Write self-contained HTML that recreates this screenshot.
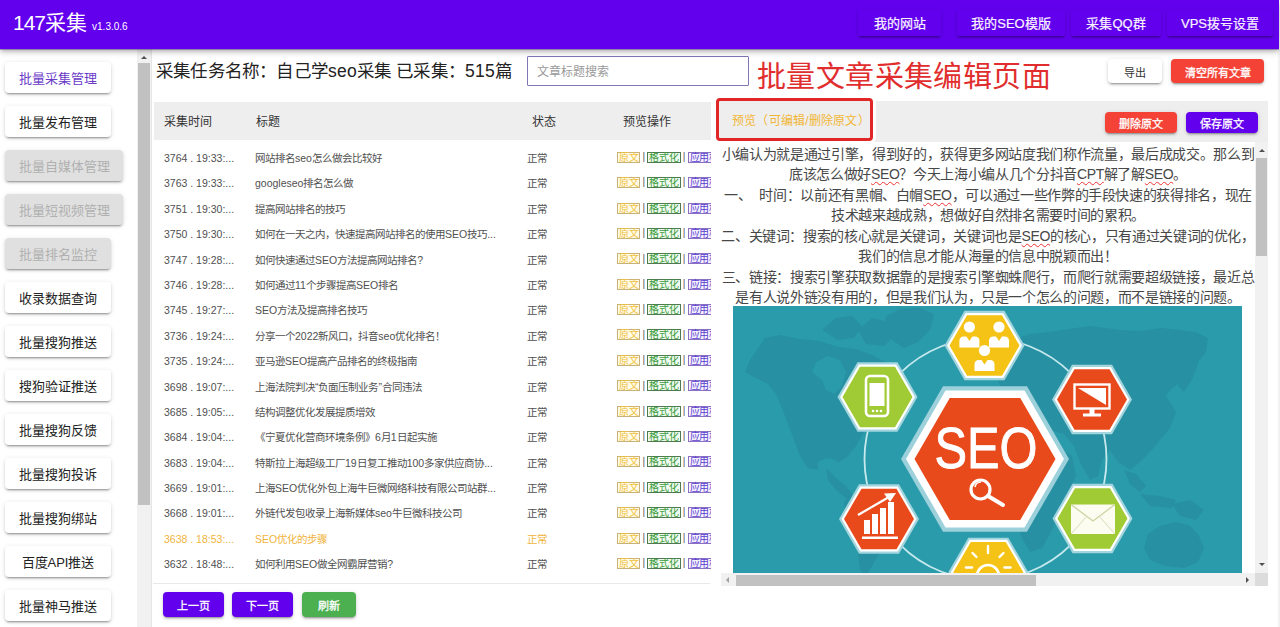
<!DOCTYPE html>
<html lang="zh-CN">
<head>
<meta charset="utf-8">
<style>
*{box-sizing:border-box;margin:0;padding:0}
html,body{width:1280px;height:627px;overflow:hidden;background:#fff;font-family:"Liberation Sans",sans-serif;color:#333}
.abs{position:absolute}
#hdr{position:absolute;left:0;top:0;width:1279px;height:49px;background:#6200ee;box-shadow:0 1px 0 rgba(40,0,120,.3),0 2px 4px -1px rgba(0,0,0,.2),0 4px 5px 0 rgba(0,0,0,.12),0 1px 10px 0 rgba(0,0,0,.1);z-index:5}
#logo{position:absolute;left:13px;top:9px;color:#fff;font-size:21px;line-height:28px;white-space:nowrap}
#logo small{font-size:10px;margin-left:5px}
.nav{position:absolute;top:9px;height:27px;color:#fbf4ff;font-size:13px;line-height:29px;-webkit-text-stroke:0.2px currentColor;text-align:center;border-radius:2px;box-shadow:0 3px 1px -2px rgba(0,0,0,.2),0 2px 2px 0 rgba(0,0,0,.14),0 1px 5px 0 rgba(0,0,0,.12)}
.sb{position:absolute;left:5px;height:31px;font-size:13px;line-height:33px;text-align:center;background:#fff;color:#222;border-radius:4px;box-shadow:0 3px 1px -2px rgba(0,0,0,.2),0 2px 2px 0 rgba(0,0,0,.14),0 1px 5px 0 rgba(0,0,0,.12);white-space:nowrap}
.sb.dis{background:#e0e0e0;color:#b0b0b0}
.sb.act{color:#6a3bc7}
#sscroll{position:absolute;left:137px;top:49px;width:15px;height:578px;background:#f1f1f1;border-right:1px solid #e6e6e6}
#sarrow{position:absolute;left:141px;top:56px;width:0;height:0;border-left:3px solid transparent;border-right:3px solid transparent;border-bottom:3px solid #505050}
#sthumb{position:absolute;left:138px;top:63px;width:12px;height:442px;background:#c1c1c1}
#title{position:absolute;left:156px;top:57px;letter-spacing:0.2px;font-size:17.5px;line-height:28px;color:#222;white-space:nowrap}
#search{position:absolute;left:527px;top:56px;width:222px;height:30px;border:1px solid #8374b4;border-radius:1px;font-size:12px;line-height:30px;padding-left:9px;color:#999}
#bigred{position:absolute;left:757px;top:58px;letter-spacing:0.4px;font-size:29px;line-height:38px;color:#e12d2d;white-space:nowrap}
.btn{position:absolute;-webkit-text-stroke:0.3px currentColor;padding-top:1.5px;height:24px;line-height:24px;font-size:11px;text-align:center;border-radius:4px;white-space:nowrap;box-shadow:0 3px 1px -2px rgba(0,0,0,.2),0 2px 2px 0 rgba(0,0,0,.14),0 1px 5px 0 rgba(0,0,0,.12)}
#thead{position:absolute;left:154px;top:102px;width:557px;height:38px;background:#eeeeee}
.th{position:absolute;top:1px;line-height:38px;font-size:12px;color:#333;white-space:nowrap}
#rows{position:absolute;left:154px;top:146px;width:557px;height:437px;overflow:hidden}
.row{position:relative;height:25.4px;font-size:10.5px;line-height:25.4px;color:#505050;white-space:nowrap}
.row span{position:absolute;top:0}
.row.hl{color:#f0b43c}
.tag{font-style:normal;display:inline-block;height:11px;line-height:9px;font-size:10px;border:1px solid;padding:0 1px;vertical-align:middle;position:relative;top:-2px;letter-spacing:-0.3px}
.t1{color:#f0c040;border-color:#c8b27a;background:#fffbe6}
.t2{color:#3c9c3c;border-color:#4f7a4f;background:#f0faf0}
.t3{color:#5a3fd0;border-color:#8a70c0;background:#f6f2fd}
.sep{font-style:normal;display:inline-block;width:7px;position:relative;top:-2px;text-align:center;color:#555;font-size:10px}
#divider{position:absolute;left:153px;top:583px;width:557px;height:1px;background:#e8e8e8}
#phead{position:absolute;left:717px;top:101px;width:551px;height:41px;background:#eeeeee}
#redbox{position:absolute;left:716px;top:98px;width:157px;height:43px;border:3px solid #e02626;border-radius:4px;box-shadow:0 0 0 3px #fff;background:#eeeeee}
#redbox div{position:absolute;left:13px;top:1px;line-height:38px;font-size:12px;letter-spacing:0.2px;color:#f2b635;white-space:nowrap}
#ta{position:absolute;left:721px;top:142px;width:547px;height:444px;overflow:hidden;background:#fff}
#txt{position:absolute;left:0;top:2px;width:534px;white-space:nowrap;font-size:14px;letter-spacing:-0.35px;line-height:20.45px;text-align:center;color:#474747}
.sp{text-decoration:underline wavy #e33;text-decoration-thickness:1px;text-underline-offset:2px}
#seo{position:absolute;left:12px;top:164px}
#vs{position:absolute;left:534px;top:0;width:13px;height:431px;background:#f1f1f1}
#hs{position:absolute;left:0;top:431px;width:534px;height:13px;background:#f1f1f1}
#corner{position:absolute;left:534px;top:431px;width:13px;height:13px;background:#dcdcdc}
.tri{position:absolute;width:0;height:0}
#vthumb{position:absolute;left:1px;top:16px;width:11px;height:98px;background:#c1c1c1}
#hthumb{position:absolute;left:15px;top:1.5px;width:300px;height:11px;background:#c1c1c1}
</style>
</head>
<body>
<div id="hdr">
  <div id="logo"><span style="letter-spacing:-1px">147</span>采集<small>v1.3.0.6</small></div>
  <div class="nav" style="left:858px;width:83px">我的网站</div>
  <div class="nav" style="left:957px;width:108px">我的SEO模版</div>
  <div class="nav" style="left:1071px;width:90px">采集QQ群</div>
  <div class="nav" style="left:1167px;width:106px">VPS拨号设置</div>
</div>

<!-- sidebar -->
<div class="sb act" style="top:62px;width:106px">批量采集管理</div>
<div class="sb" style="top:106px;width:106px">批量发布管理</div>
<div class="sb dis" style="top:150px;width:118px">批量自媒体管理</div>
<div class="sb dis" style="top:194px;width:118px">批量短视频管理</div>
<div class="sb dis" style="top:238px;width:106px">批量排名监控</div>
<div class="sb" style="top:282px;width:106px">收录数据查询</div>
<div class="sb" style="top:326px;width:106px">批量搜狗推送</div>
<div class="sb" style="top:370px;width:106px">搜狗验证推送</div>
<div class="sb" style="top:414px;width:106px">批量搜狗反馈</div>
<div class="sb" style="top:458px;width:106px">批量搜狗投诉</div>
<div class="sb" style="top:502px;width:106px">批量搜狗绑站</div>
<div class="sb" style="top:546px;width:106px">百度API推送</div>
<div class="sb" style="top:590px;width:106px">批量神马推送</div>
<div id="sscroll"></div>
<div id="sthumb"></div><div id="sarrow"></div>

<div id="title">采集任务名称：自己学seo采集 已采集：515篇</div>
<div id="search">文章标题搜索</div>
<div id="bigred">批量文章采集编辑页面</div>
<div class="btn" style="left:1108px;top:59px;width:54px;background:#fff;color:#333;-webkit-text-stroke:0;">导出</div>
<div class="btn" style="left:1171px;top:59px;width:93px;background:#f44336;color:#fff">清空所有文章</div>

<div id="thead">
  <div class="th" style="left:10px">采集时间</div>
  <div class="th" style="left:102px">标题</div>
  <div class="th" style="left:378px">状态</div>
  <div class="th" style="left:469px">预览操作</div>
</div>
<div id="rows">
<div class="row"><span style="left:10px">3764 . 19:33:...</span><span style="left:101px">网站排名seo怎么做会比较好</span><span style="left:373px">正常</span><span class="ops" style="left:463px"><i class="tag t1">原文</i><i class="sep">|</i><i class="tag t2">格式化</i><i class="sep">|</i><i class="tag t3">应用格式</i></span></div>
<div class="row"><span style="left:10px">3763 . 19:33:...</span><span style="left:101px">googleseo排名怎么做</span><span style="left:373px">正常</span><span class="ops" style="left:463px"><i class="tag t1">原文</i><i class="sep">|</i><i class="tag t2">格式化</i><i class="sep">|</i><i class="tag t3">应用格式</i></span></div>
<div class="row"><span style="left:10px">3751 . 19:30:...</span><span style="left:101px">提高网站排名的技巧</span><span style="left:373px">正常</span><span class="ops" style="left:463px"><i class="tag t1">原文</i><i class="sep">|</i><i class="tag t2">格式化</i><i class="sep">|</i><i class="tag t3">应用格式</i></span></div>
<div class="row"><span style="left:10px">3750 . 19:30:...</span><span style="left:101px">如何在一天之内，快速提高网站排名的使用SEO技巧...</span><span style="left:373px">正常</span><span class="ops" style="left:463px"><i class="tag t1">原文</i><i class="sep">|</i><i class="tag t2">格式化</i><i class="sep">|</i><i class="tag t3">应用格式</i></span></div>
<div class="row"><span style="left:10px">3747 . 19:28:...</span><span style="left:101px">如何快速通过SEO方法提高网站排名?</span><span style="left:373px">正常</span><span class="ops" style="left:463px"><i class="tag t1">原文</i><i class="sep">|</i><i class="tag t2">格式化</i><i class="sep">|</i><i class="tag t3">应用格式</i></span></div>
<div class="row"><span style="left:10px">3746 . 19:28:...</span><span style="left:101px">如何通过11个步骤提高SEO排名</span><span style="left:373px">正常</span><span class="ops" style="left:463px"><i class="tag t1">原文</i><i class="sep">|</i><i class="tag t2">格式化</i><i class="sep">|</i><i class="tag t3">应用格式</i></span></div>
<div class="row"><span style="left:10px">3745 . 19:27:...</span><span style="left:101px">SEO方法及提高排名技巧</span><span style="left:373px">正常</span><span class="ops" style="left:463px"><i class="tag t1">原文</i><i class="sep">|</i><i class="tag t2">格式化</i><i class="sep">|</i><i class="tag t3">应用格式</i></span></div>
<div class="row"><span style="left:10px">3736 . 19:24:...</span><span style="left:101px">分享一个2022新风口，抖音seo优化排名！</span><span style="left:373px">正常</span><span class="ops" style="left:463px"><i class="tag t1">原文</i><i class="sep">|</i><i class="tag t2">格式化</i><i class="sep">|</i><i class="tag t3">应用格式</i></span></div>
<div class="row"><span style="left:10px">3735 . 19:24:...</span><span style="left:101px">亚马逊SEO提高产品排名的终极指南</span><span style="left:373px">正常</span><span class="ops" style="left:463px"><i class="tag t1">原文</i><i class="sep">|</i><i class="tag t2">格式化</i><i class="sep">|</i><i class="tag t3">应用格式</i></span></div>
<div class="row"><span style="left:10px">3698 . 19:07:...</span><span style="left:101px">上海法院判决“负面压制业务”合同违法</span><span style="left:373px">正常</span><span class="ops" style="left:463px"><i class="tag t1">原文</i><i class="sep">|</i><i class="tag t2">格式化</i><i class="sep">|</i><i class="tag t3">应用格式</i></span></div>
<div class="row"><span style="left:10px">3685 . 19:05:...</span><span style="left:101px">结构调整优化发展提质增效</span><span style="left:373px">正常</span><span class="ops" style="left:463px"><i class="tag t1">原文</i><i class="sep">|</i><i class="tag t2">格式化</i><i class="sep">|</i><i class="tag t3">应用格式</i></span></div>
<div class="row"><span style="left:10px">3684 . 19:04:...</span><span style="left:101px">《宁夏优化营商环境条例》6月1日起实施</span><span style="left:373px">正常</span><span class="ops" style="left:463px"><i class="tag t1">原文</i><i class="sep">|</i><i class="tag t2">格式化</i><i class="sep">|</i><i class="tag t3">应用格式</i></span></div>
<div class="row"><span style="left:10px">3683 . 19:04:...</span><span style="left:101px">特斯拉上海超级工厂19日复工推动100多家供应商协...</span><span style="left:373px">正常</span><span class="ops" style="left:463px"><i class="tag t1">原文</i><i class="sep">|</i><i class="tag t2">格式化</i><i class="sep">|</i><i class="tag t3">应用格式</i></span></div>
<div class="row"><span style="left:10px">3669 . 19:01:...</span><span style="left:101px">上海SEO优化外包上海牛巨微网络科技有限公司站群...</span><span style="left:373px">正常</span><span class="ops" style="left:463px"><i class="tag t1">原文</i><i class="sep">|</i><i class="tag t2">格式化</i><i class="sep">|</i><i class="tag t3">应用格式</i></span></div>
<div class="row"><span style="left:10px">3668 . 19:01:...</span><span style="left:101px">外链代发包收录上海新媒体seo牛巨微科技公司</span><span style="left:373px">正常</span><span class="ops" style="left:463px"><i class="tag t1">原文</i><i class="sep">|</i><i class="tag t2">格式化</i><i class="sep">|</i><i class="tag t3">应用格式</i></span></div>
<div class="row hl"><span style="left:10px">3638 . 18:53:...</span><span style="left:101px">SEO优化的步骤</span><span style="left:373px">正常</span><span class="ops" style="left:463px"><i class="tag t1">原文</i><i class="sep">|</i><i class="tag t2">格式化</i><i class="sep">|</i><i class="tag t3">应用格式</i></span></div>
<div class="row"><span style="left:10px">3632 . 18:48:...</span><span style="left:101px">如何利用SEO做全网霸屏营销?</span><span style="left:373px">正常</span><span class="ops" style="left:463px"><i class="tag t1">原文</i><i class="sep">|</i><i class="tag t2">格式化</i><i class="sep">|</i><i class="tag t3">应用格式</i></span></div>
</div>
<div id="divider"></div>

<div id="phead"></div>
<div id="redbox"><div>预览（可编辑/删除原文）</div></div>
<div class="btn" style="left:1105px;top:112px;width:72px;height:21px;line-height:21px;background:#f44336;color:#fff">删除原文</div>
<div class="btn" style="left:1186px;top:112px;width:72px;height:21px;line-height:21px;background:#6200ee;color:#fff">保存原文</div>

<div id="ta">
  <div id="txt">小编认为就是通过引擎，得到好的，获得更多网站度我们称作流量，最后成成交。那么到<br>底该怎么做好<span class="sp">SEO</span>？今天上海小编从几个分抖音<span class="sp">CPT</span>解了解<span class="sp">SEO</span>。<br>一、<span style="margin-left:8px"></span>时间：以前还有黑帽、白帽<span class="sp">SEO</span>，可以通过一些作弊的手段快速的获得排名，现在<br>技术越来越成熟，想做好自然排名需要时间的累积。<br>二、关键词：搜索的核心就是关键词，关键词也是<span class="sp">SEO</span>的核心，只有通过关键词的优化，<br>我们的信息才能从海量的信息中脱颖而出！<br>三、链接：搜索引擎获取数据靠的是搜索引擎蜘蛛爬行，而爬行就需要超级链接，最近总<br>是有人说外链没有用的，但是我们认为，只是一个怎么的问题，而不是链接的问题。</div>
  <svg id="seo" width="509" height="290" viewBox="733 306 509 290">
<rect x="733" y="306" width="509" height="290" fill="#2a9bab"/>
<g fill="#2790a2">
<path d="M745,372 L750,360 L758,348 L765,338 L780,335 L800,339 L820,341 L838,347 L856,349 L872,355 L890,365 L900,380 L892,398 L878,412 L866,428 L856,446 L846,458 L832,466 L820,470 L808,468 L800,456 L794,440 L788,424 L782,408 L776,394 L768,384 L756,378 Z"/>
<path d="M816,362 L828,356 L840,360 L846,372 L842,386 L834,394 L826,390 L822,380 L812,372 Z" fill="#2a9bab"/>
<path d="M818,462 C826,456 838,458 840,466 C838,474 826,476 818,470 Z" fill="#2a9bab"/>
<path d="M822,330 L836,318 L852,316 L862,326 L854,338 L838,340 Z"/>
<path d="M858,330 L872,318 L888,322 L896,334 L884,346 L866,344 Z"/>
<path d="M886,316 L900,309 L920,308 L934,314 L930,330 L918,342 L904,348 L892,340 L884,328 Z"/>
<path d="M826,468 L836,478 L846,486 L852,494 L846,498 L836,490 L828,480 Z"/>
<path d="M848,494 L866,496 L882,506 L892,520 L888,538 L880,552 L872,566 L866,576 L860,570 L858,552 L852,534 L846,516 L844,504 Z"/>
<path d="M1000,352 L1012,340 L1030,334 L1048,332 L1062,330 L1090,326 L1120,330 L1140,331 L1162,328 L1180,330 L1196,332 L1208,338 L1206,352 L1198,362 L1190,376 L1172,388 L1166,396 L1176,412 L1170,428 L1160,440 L1150,452 L1140,462 L1130,470 L1118,462 L1110,450 L1102,460 L1098,476 L1090,480 L1080,462 L1074,446 L1064,434 L1050,430 L1036,428 L1022,420 L1010,408 L1002,392 L996,374 Z"/>
<path d="M1186,356 L1194,350 L1198,364 L1192,380 L1184,392 L1178,386 L1184,372 Z"/>
<path d="M1124,470 L1136,474 L1146,486 L1140,492 L1130,484 Z"/>
<path d="M1140,494 L1160,496 L1176,500 L1172,508 L1150,506 Z"/>
<path d="M1172,504 L1190,500 L1204,510 L1196,520 L1180,516 Z"/>
<path d="M1000,440 L1024,432 L1046,436 L1060,448 L1072,456 L1076,476 L1066,496 L1058,516 L1050,534 L1042,548 L1030,552 L1022,538 L1016,518 L1006,500 L996,484 L992,462 Z"/>
<path d="M1036,524 L1044,520 L1046,534 L1040,544 L1034,538 Z"/>
<path d="M1148,534 L1160,526 L1176,522 L1190,526 L1198,534 L1204,548 L1198,562 L1184,568 L1166,566 L1150,560 L1144,548 Z"/>
</g>
<circle cx="985.5" cy="459" r="121" fill="none" stroke="#c6e9ee" stroke-width="1.8"/>
<polygon points="1069.00,459.00 1027.00,531.75 943.00,531.75 901.00,459.00 943.00,386.25 1027.00,386.25" fill="#9cd0da"/>
<polygon points="1064.00,459.00 1024.50,527.42 945.50,527.42 906.00,459.00 945.50,390.58 1024.50,390.58" fill="#ffffff"/>
<polygon points="1055.50,459.00 1020.25,520.05 949.75,520.05 914.50,459.00 949.75,397.95 1020.25,397.95" fill="#e84a1b"/>
<text x="986" y="468" text-anchor="middle" font-family="Liberation Sans" font-size="57.5" fill="#fff" textLength="103" lengthAdjust="spacingAndGlyphs" stroke="#fff" stroke-width="0.9">SEO</text>
<circle cx="980.5" cy="489.5" r="9.5" fill="none" stroke="#fff" stroke-width="3.2"/>
<path d="M975,487 A6,6 0 0 1 981,482" fill="none" stroke="#fff" stroke-width="1.6"/>
<line x1="988" y1="496" x2="1003" y2="505" stroke="#fff" stroke-width="4" stroke-linecap="round"/>
<polygon points="1024.50,345.50 1004.50,380.14 964.50,380.14 944.50,345.50 964.50,310.86 1004.50,310.86" fill="#a3d5de"/><polygon points="1022.00,345.50 1003.25,377.98 965.75,377.98 947.00,345.50 965.75,313.02 1003.25,313.02" fill="#ffffff"/><polygon points="1019.50,345.50 1002.00,375.81 967.00,375.81 949.50,345.50 967.00,315.19 1002.00,315.19" fill="#f5c316"/>
<circle cx="969.4" cy="327" r="5.6" fill="#fff"/><path d="M959.4,347.5 L959.4,341 Q959.4,336.5 963.9,336.5 L966.4,336.5 L969.4,341 L972.4,336.5 L974.9,336.5 Q979.4,336.5 979.4,341 L979.4,347.5 Z" fill="#fff"/>
<circle cx="999" cy="327" r="5.6" fill="#fff"/><path d="M989,347.5 L989,341 Q989,336.5 993.5,336.5 L996,336.5 L999,341 L1002,336.5 L1004.5,336.5 Q1009,336.5 1009,341 L1009,347.5 Z" fill="#fff"/>
<circle cx="984.5" cy="350.5" r="5.6" fill="#fff"/><path d="M974.5,371.0 L974.5,364.5 Q974.5,360.0 979.0,360.0 L981.5,360.0 L984.5,364.5 L987.5,360.0 L990.0,360.0 Q994.5,360.0 994.5,364.5 L994.5,371.0 Z" fill="#fff"/>
<polygon points="917.50,397.00 897.50,431.64 857.50,431.64 837.50,397.00 857.50,362.36 897.50,362.36" fill="#a3d5de"/><polygon points="915.00,397.00 896.25,429.48 858.75,429.48 840.00,397.00 858.75,364.52 896.25,364.52" fill="#ffffff"/><polygon points="912.50,397.00 895.00,427.31 860.00,427.31 842.50,397.00 860.00,366.69 895.00,366.69" fill="#a0cb35"/>
<rect x="866" y="376" width="22" height="40" rx="4" fill="none" stroke="#fff" stroke-width="2.6"/>
<rect x="869.5" y="383" width="15" height="23" fill="#fff"/>
<circle cx="873" cy="411" r="1.3" fill="#fff"/><circle cx="877" cy="411" r="1.3" fill="#fff"/><circle cx="881" cy="411" r="1.3" fill="#fff"/>
<polygon points="1132.00,399.50 1112.00,434.14 1072.00,434.14 1052.00,399.50 1072.00,364.86 1112.00,364.86" fill="#a3d5de"/><polygon points="1129.50,399.50 1110.75,431.98 1073.25,431.98 1054.50,399.50 1073.25,367.02 1110.75,367.02" fill="#ffffff"/><polygon points="1127.00,399.50 1109.50,429.81 1074.50,429.81 1057.00,399.50 1074.50,369.19 1109.50,369.19" fill="#e84a1b"/>
<rect x="1074.5" y="384.5" width="35" height="24" fill="none" stroke="#fff" stroke-width="2.4"/>
<polygon points="1078,388 1106,388 1106,405" fill="#fff"/>
<rect x="1089.5" y="409" width="5" height="5" fill="#fff"/><rect x="1083" y="413.5" width="18" height="3" fill="#fff"/>
<polygon points="919.00,519.00 899.00,553.64 859.00,553.64 839.00,519.00 859.00,484.36 899.00,484.36" fill="#a3d5de"/><polygon points="916.50,519.00 897.75,551.48 860.25,551.48 841.50,519.00 860.25,486.52 897.75,486.52" fill="#ffffff"/><polygon points="914.00,519.00 896.50,549.31 861.50,549.31 844.00,519.00 861.50,488.69 896.50,488.69" fill="#e84a1b"/>
<rect x="864" y="520" width="6" height="14" fill="#fff"/>
<rect x="872" y="514" width="6" height="20" fill="#fff"/>
<rect x="880" y="508" width="6" height="26" fill="#fff"/>
<rect x="888" y="502" width="6" height="32" fill="#fff"/>
<rect x="862" y="536.5" width="36" height="2.5" fill="#fff"/>
<line x1="858" y1="515" x2="889" y2="497" stroke="#fff" stroke-width="2.2"/>
<polygon points="896,493 884,493.5 890,502" fill="#fff"/>
<polygon points="1132.50,518.50 1112.50,553.14 1072.50,553.14 1052.50,518.50 1072.50,483.86 1112.50,483.86" fill="#a3d5de"/><polygon points="1130.00,518.50 1111.25,550.98 1073.75,550.98 1055.00,518.50 1073.75,486.02 1111.25,486.02" fill="#ffffff"/><polygon points="1127.50,518.50 1110.00,548.81 1075.00,548.81 1057.50,518.50 1075.00,488.19 1110.00,488.19" fill="#a0cb35"/>
<rect x="1071" y="504.5" width="44" height="29.5" fill="#fcfcf0"/>
<polyline points="1071,504.5 1093,521 1115,504.5" fill="none" stroke="#c9d4a0" stroke-width="1.2"/>
<path d="M1071,534 L1087,516 M1115,534 L1099,516" fill="none" stroke="#d6ddb8" stroke-width="1"/>
<polygon points="1028.30,572.30 1008.30,606.94 968.30,606.94 948.30,572.30 968.30,537.66 1008.30,537.66" fill="#a3d5de"/><polygon points="1025.80,572.30 1007.05,604.78 969.55,604.78 950.80,572.30 969.55,539.82 1007.05,539.82" fill="#ffffff"/><polygon points="1023.30,572.30 1005.80,602.61 970.80,602.61 953.30,572.30 970.80,541.99 1005.80,541.99" fill="#f5c316"/>
<path d="M977,576 A11,11 0 0 1 999,576" fill="none" stroke="#fff" stroke-width="2.6"/>
<line x1="988" y1="546" x2="988" y2="553" stroke="#fff" stroke-width="2.4" stroke-linecap="round"/>
<line x1="972.5" y1="553" x2="976.5" y2="557" stroke="#fff" stroke-width="2.4" stroke-linecap="round"/>
<line x1="1003.5" y1="553" x2="999.5" y2="557" stroke="#fff" stroke-width="2.4" stroke-linecap="round"/>
<line x1="966" y1="567.5" x2="972" y2="567.5" stroke="#fff" stroke-width="2.4" stroke-linecap="round"/>
<line x1="1004.5" y1="567.5" x2="1010.5" y2="567.5" stroke="#fff" stroke-width="2.4" stroke-linecap="round"/>
</svg>
  <div id="vs"><div id="vthumb"></div><div class="tri" style="left:3.5px;top:7px;border-left:3px solid transparent;border-right:3px solid transparent;border-bottom:3px solid #505050"></div><div class="tri" style="left:3.5px;top:421px;border-left:3px solid transparent;border-right:3px solid transparent;border-top:3px solid #505050"></div></div>
  <div id="hs"><div id="hthumb"></div><div class="tri" style="left:5px;top:3.5px;border-top:3px solid transparent;border-bottom:3px solid transparent;border-right:3px solid #a0a0a0"></div><div class="tri" style="left:525px;top:3.5px;border-top:3px solid transparent;border-bottom:3px solid transparent;border-left:3px solid #505050"></div></div>
  <div id="corner"></div>
</div>

<div class="btn" style="left:163px;top:592px;width:61px;height:25px;line-height:25px;background:#6200ee;color:#fff">上一页</div>
<div class="btn" style="left:232px;top:592px;width:61px;height:25px;line-height:25px;background:#6200ee;color:#fff">下一页</div>
<div class="btn" style="left:302px;top:592px;width:54px;height:25px;line-height:25px;background:#4caf50;color:#fff">刷新</div>
<div style="position:absolute;left:1277px;top:49px;width:3px;height:578px;background:linear-gradient(to right,#fff,#ececec)"></div>
</body>
</html>
